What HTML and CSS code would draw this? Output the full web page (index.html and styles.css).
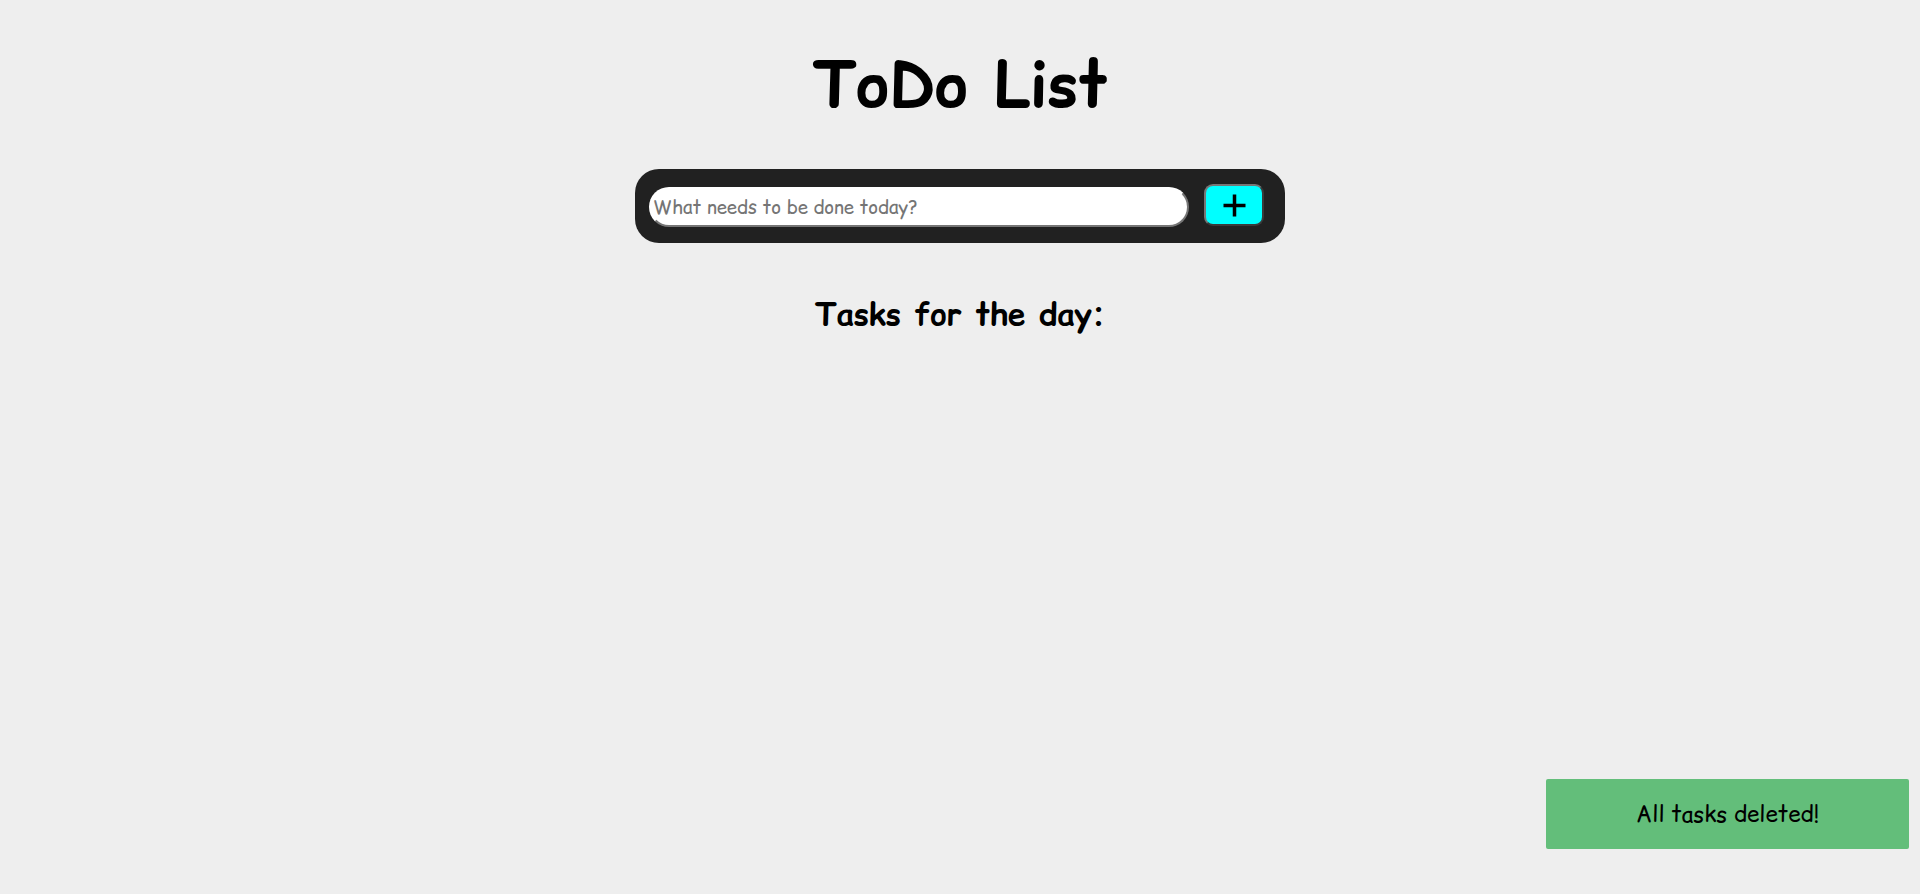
FILE: index.html
```html
<!DOCTYPE html>
<html lang="en">
<head>
<meta charset="utf-8">
<title>ToDo List</title>
<link rel="stylesheet" href="styles.css">
</head>
<body>
<main class="app">
  <h1 class="title">ToDo List</h1>
  <form class="entry">
    <input class="entry-input" type="text" placeholder="What needs to be done today?">
    <button class="entry-add" type="button" aria-label="Add task">
      <svg width="23" height="23" viewBox="0 0 23 23"><path d="M11.5 0.5v22M0.5 11.5h22" stroke="#000" stroke-width="3.5"/></svg>
    </button>
  </form>
  <h2 class="subtitle">Tasks for the day:</h2>
  <ul class="tasks"></ul>
</main>
<div class="toast">All tasks deleted!</div>
</body>
</html>
```
FILE: styles.css
```css
html, body {
  margin: 0;
  height: 100%;
}
body {
  background: #eeeeee;
  font-family: "Comic Relief", "Comic Sans MS", "Comic Neue", cursive, sans-serif;
  color: #000;
}
.app {
  display: flex;
  flex-direction: column;
  align-items: center;
  padding-top: 41px;
}
.title {
  margin: 0;
  font-size: 63px;
  line-height: normal;
  font-weight: bold;
}
.entry {
  margin-top: 41px;
  width: 650px;
  height: 74px;
  box-sizing: border-box;
  background: #212121;
  border-radius: 24px;
  display: flex;
  align-items: center;
  padding: 0 21px 0 14px;
  gap: 15px;
}
.entry-input {
  width: 540px;
  height: 40px;
  margin-top: 2px;
  box-sizing: border-box;
  border-radius: 20px;
  border: 2px solid #767676;
  border-top-color: #ffffff;
  border-left-color: #ffffff;
  background: #fff;
  font-family: inherit;
  font-size: 18.6px;
  padding: 0 2px;
  outline: none;
}
.entry-input::placeholder {
  color: #757575;
}
.entry-add {
  width: 60px;
  height: 42px;
  margin-top: -2px;
  box-sizing: border-box;
  background: #00ffff;
  border: 2px solid #767676;
  border-bottom-color: #3a3a3a;
  border-right-color: #3a3a3a;
  border-radius: 9px;
  display: flex;
  align-items: center;
  justify-content: center;
  padding: 0;
  cursor: pointer;
}
.subtitle {
  margin: 49px 0 0;
  font-size: 31.2px;
  line-height: normal;
  font-weight: bold;
}
.tasks {
  list-style: none;
  margin: 0;
  padding: 0;
}
.toast {
  position: fixed;
  right: 11px;
  bottom: 45px;
  width: 363px;
  height: 70px;
  background: #63be7a;
  border-radius: 2px;
  display: flex;
  align-items: center;
  justify-content: center;
  font-size: 22.4px;
}
```
